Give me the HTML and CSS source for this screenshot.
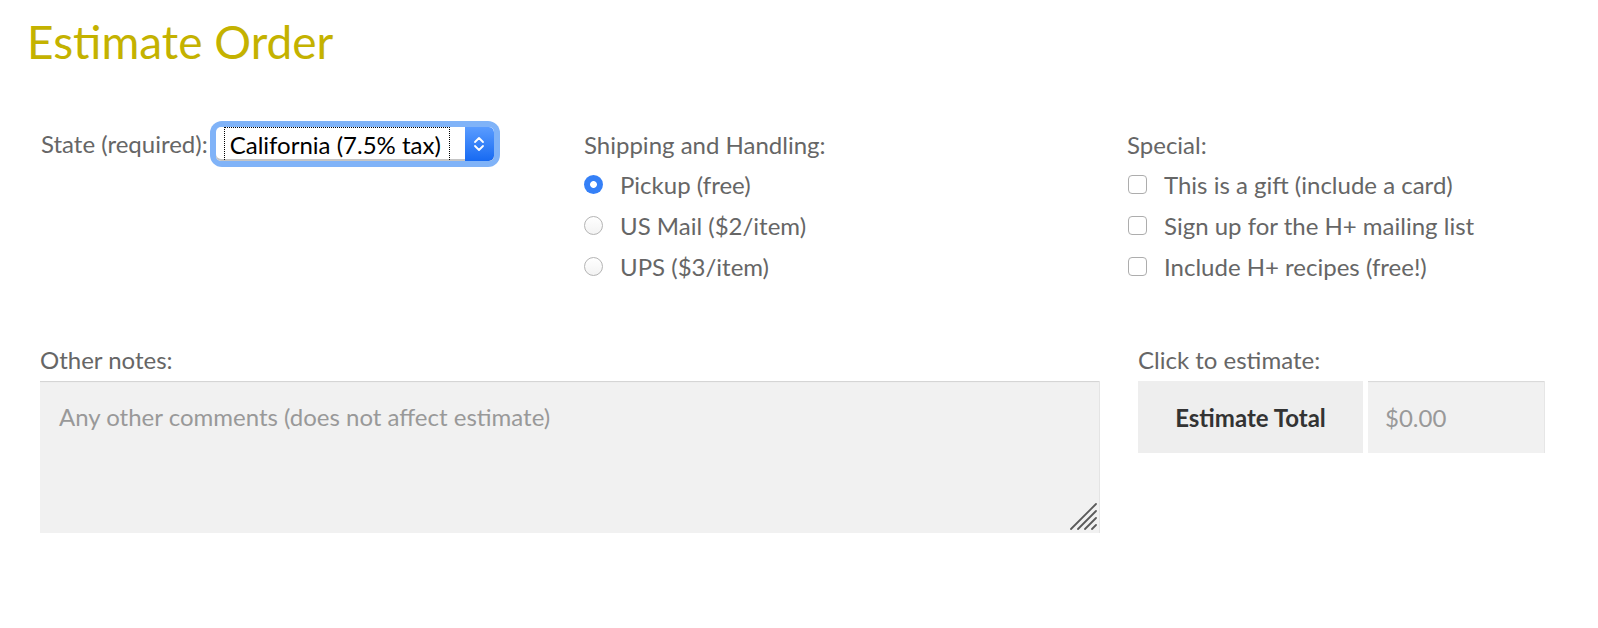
FILE: index.html
```html
<!DOCTYPE html>
<html>
<head>
<meta charset="utf-8">
<link rel="stylesheet" href="styles.css">
</head>
<body>
<h1 class="title">Estimate Order</h1>
<div class="row-top">
  <div class="col col-state">
    <span class="label">State (required):</span>
    <div class="select-ring">
      <div class="select">
        <span class="select-value">California (7.5% tax)</span>
        <span class="select-btn">
          <svg width="14" height="22" viewBox="0 0 14 22"><path d="M3 9 L7 5 L11 9 M3 13 L7 17 L11 13" fill="none" stroke="#fff" stroke-width="1.8" stroke-linecap="round" stroke-linejoin="round"/></svg>
        </span>
      </div>
    </div>
  </div>
  <div class="col">
    <div class="label">Shipping and Handling:</div>
    <div class="opts">
      <div class="opt"><span class="radio checked"></span><span>Pickup (free)</span></div>
      <div class="opt"><span class="radio"></span><span>US Mail ($2/item)</span></div>
      <div class="opt"><span class="radio"></span><span>UPS ($3/item)</span></div>
    </div>
  </div>
  <div class="col">
    <div class="label">Special:</div>
    <div class="opts">
      <div class="opt"><span class="check"></span><span>This is a gift (include a card)</span></div>
      <div class="opt"><span class="check"></span><span>Sign up for the H+ mailing list</span></div>
      <div class="opt"><span class="check"></span><span>Include H+ recipes (free!)</span></div>
    </div>
  </div>
</div>
<div class="row-bottom">
  <div class="notes">
    <div class="label">Other notes:</div>
    <div class="textarea">
      <span class="placeholder">Any other comments (does not affect estimate)</span>
      <svg class="grip" width="27" height="27" viewBox="0 0 27 27"><path d="M1 26 L26 1 M8 26 L26 8 M15 26 L26 15 M22 26 L26 22" stroke="#5a5a5a" stroke-width="1.8" stroke-linecap="round"/></svg>
    </div>
  </div>
  <div class="estimate">
    <div class="label">Click to estimate:</div>
    <div class="est-row">
      <div class="est-btn">Estimate Total</div>
      <div class="est-out">$0.00</div>
    </div>
  </div>
</div>
</body>
</html>
```
FILE: styles.css
```css
body {
  margin: 0;
  font-family: Lato, "Liberation Sans", sans-serif;
  color: #666;
  background: #fff;
}
.title {
  margin: 0;
  padding: 13px 0 0 27px;
  font-weight: 400;
  font-size: 46px;
  line-height: 58px;
  color: #c4b200;
}
.row-top {
  display: grid;
  grid-template-columns: 543px 543px 1fr;
  padding: 59px 0 0 41px;
}
.label {
  font-size: 24px;
  line-height: 30px;
  color: #666;
}
.col-state {
  display: flex;
  align-items: center;
  align-self: start;
  margin-top: -9px;
}
.select-ring {
  margin-left: 2px;
  padding: 6px;
  border-radius: 12px;
  background: #80b3f8;
}
.select {
  display: flex;
  align-items: stretch;
  width: 278px;
  height: 34px;
  background: #fff;
  border-radius: 5px;
  box-shadow: inset 0 -2px 0 #c4c4c4;
  overflow: hidden;
}
.select-value {
  flex: 1;
  margin: 1px 16px 0 9px;
  padding: 0 5px;
  outline: 1px dotted #000;
  outline-offset: 0;
  font-size: 24px;
  line-height: 33px;
  color: #000;
  white-space: nowrap;
}
.select-btn {
  width: 29px;
  display: flex;
  align-items: center;
  justify-content: center;
  background: linear-gradient(#5a9cff, #176af2);
  border-radius: 0 5px 5px 0;
}
.opts {
  margin-top: 4px;
}
.opt {
  display: flex;
  align-items: center;
  height: 41px;
  font-size: 24px;
  color: #666;
}
.radio {
  width: 19px;
  height: 19px;
  border-radius: 50%;
  border: 1px solid #b4b4b4;
  background: linear-gradient(#fff, #f3f3f3);
  box-sizing: border-box;
  margin: 0 17px 0 0;
  flex: none;
}
.radio.checked {
  border: none;
  background: radial-gradient(circle, #fff 0 3px, #3580f7 3.8px);
}
.check {
  width: 19px;
  height: 19px;
  border-radius: 4px;
  border: 1px solid #adadad;
  box-sizing: border-box;
  background: #fff;
  margin: 0 17px 0 1px;
  flex: none;
}
.row-bottom {
  display: flex;
  padding: 58px 0 0 40px;
}
.notes {
  width: 1060px;
}
.textarea {
  position: relative;
  margin-top: 6px;
  height: 152px;
  background: #f1f1f1;
  box-shadow: inset 0 2px 1px -1px #d2d2d2;
  border-right: 1px solid #e4e4e4;
  box-sizing: border-box;
  padding: 21px 19px;
}
.placeholder {
  font-size: 24px;
  line-height: 30px;
  color: #999;
}
.grip {
  position: absolute;
  right: 2px;
  bottom: 3px;
}
.estimate {
  margin-left: 38px;
}
.est-row {
  display: flex;
  gap: 5px;
  margin-top: 6px;
}
.est-btn {
  width: 225px;
  height: 72px;
  background: #eee;
  display: flex;
  align-items: center;
  justify-content: center;
  font-weight: 700;
  font-size: 24px;
  color: #333;
}
.est-out {
  width: 177px;
  height: 72px;
  background: #f1f1f1;
  box-shadow: inset 0 2px 1px -1px #d8d8d8;
  border-right: 1px solid #e6e6e6;
  box-sizing: border-box;
  display: flex;
  align-items: center;
  padding-left: 17px;
  font-size: 24px;
  color: #999;
}
```
